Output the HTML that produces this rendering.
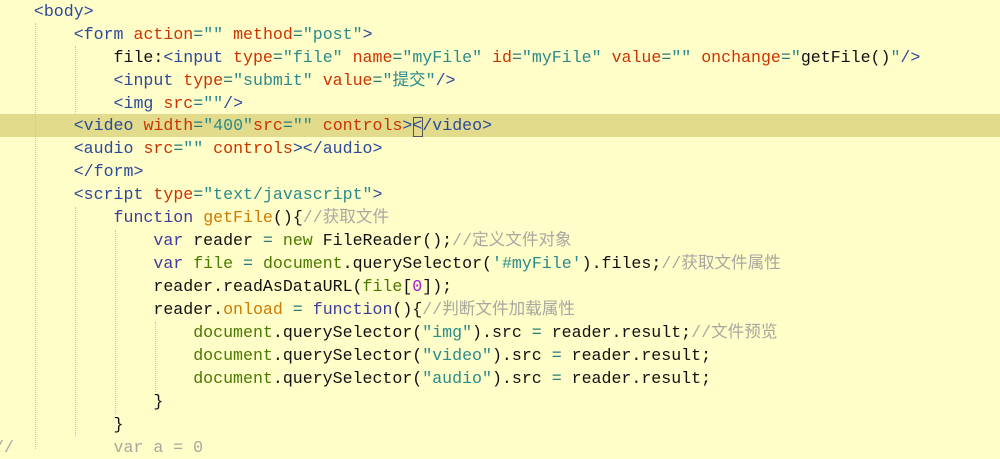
<!DOCTYPE html>
<html><head><meta charset="utf-8"><style>
body{margin:0;width:1000px;height:449px;overflow:hidden;background:#fffdc8;position:relative}
.l{position:absolute;left:4px;height:23px;line-height:23px;white-space:pre;font-family:"Liberation Mono","Noto Sans CJK SC",monospace;font-size:16.6px;color:#111}
.hl{position:absolute;left:0;width:1000px;top:114px;height:23px;background:#e2db8c}
.g{position:absolute;width:0;border-left:1px dotted #c8c8a0}
.t{color:#2b4a9a}.a{color:#cc3300}.v{color:#2a8c8c}.k{color:#3d3da0}.f{color:#d07a00}.c{color:#a8a8a0}.d{color:#4a7a00}.n{color:#a020d0}.e{color:#2a7a7a}
.cur{position:absolute;left:413px;top:117px;width:8px;height:18px;border:1px solid #555}
</style></head><body>
<div class="hl"></div>
<div class="g" style="left:35px;top:23px;height:426px"></div>
<div class="g" style="left:75px;top:46px;height:68px"></div>
<div class="g" style="left:75px;top:207px;height:230px"></div>
<div class="g" style="left:115px;top:230px;height:184px"></div>
<div class="g" style="left:155px;top:322px;height:70px"></div>
<div class="cur"></div>
<div class="l" style="top:0"><span class="t">   &lt;body&gt;</span></div>
<div class="l" style="top:23px">       <span class="t">&lt;form</span> <span class="a">action</span><span class="e">=</span><span class="v">""</span> <span class="a">method</span><span class="e">=</span><span class="v">"post"</span><span class="t">&gt;</span></div>
<div class="l" style="top:46px">           file:<span class="t">&lt;input</span> <span class="a">type</span><span class="e">=</span><span class="v">"file"</span> <span class="a">name</span><span class="e">=</span><span class="v">"myFile"</span> <span class="a">id</span><span class="e">=</span><span class="v">"myFile"</span> <span class="a">value</span><span class="e">=</span><span class="v">""</span> <span class="a">onchange</span><span class="e">=</span><span class="v">"</span>getFile()<span class="v">"</span><span class="t">/&gt;</span></div>
<div class="l" style="top:69px">           <span class="t">&lt;input</span> <span class="a">type</span><span class="e">=</span><span class="v">"submit"</span> <span class="a">value</span><span class="e">=</span><span class="v">"提交"</span><span class="t">/&gt;</span></div>
<div class="l" style="top:92px">           <span class="t">&lt;img</span> <span class="a">src</span><span class="e">=</span><span class="v">""</span><span class="t">/&gt;</span></div>
<div class="l" style="top:114px">       <span class="t">&lt;video</span> <span class="a">width</span><span class="e">=</span><span class="v">"400"</span><span class="a">src</span><span class="e">=</span><span class="v">""</span> <span class="a">controls</span><span class="t">&gt;&lt;/video&gt;</span></div>
<div class="l" style="top:137px">       <span class="t">&lt;audio</span> <span class="a">src</span><span class="e">=</span><span class="v">""</span> <span class="a">controls</span><span class="t">&gt;&lt;/audio&gt;</span></div>
<div class="l" style="top:160px">       <span class="t">&lt;/form&gt;</span></div>
<div class="l" style="top:183px">       <span class="t">&lt;script</span> <span class="a">type</span><span class="e">=</span><span class="v">"text/javascript"</span><span class="t">&gt;</span></div>
<div class="l" style="top:206px">           <span class="k">function</span> <span class="f">getFile</span>(){<span class="c">//获取文件</span></div>
<div class="l" style="top:229px">               <span class="k">var</span> reader <span class="e">=</span> <span class="d">new</span> FileReader();<span class="c">//定义文件对象</span></div>
<div class="l" style="top:252px">               <span class="k">var</span> <span class="d">file</span> <span class="e">=</span> <span class="d">document</span>.querySelector(<span class="v">'#myFile'</span>).files;<span class="c">//获取文件属性</span></div>
<div class="l" style="top:275px">               reader.readAsDataURL(<span class="d">file</span>[<span class="n">0</span>]);</div>
<div class="l" style="top:298px">               reader.<span class="f">onload</span> <span class="e">=</span> <span class="k">function</span>(){<span class="c">//判断文件加载属性</span></div>
<div class="l" style="top:321px">                   <span class="d">document</span>.querySelector(<span class="v">"img"</span>).src <span class="e">=</span> reader.result;<span class="c">//文件预览</span></div>
<div class="l" style="top:344px">                   <span class="d">document</span>.querySelector(<span class="v">"video"</span>).src <span class="e">=</span> reader.result;</div>
<div class="l" style="top:367px">                   <span class="d">document</span>.querySelector(<span class="v">"audio"</span>).src <span class="e">=</span> reader.result;</div>
<div class="l" style="top:390px">               }</div>
<div class="l" style="top:413px">           }</div>
<div class="l" style="top:436px;left:-6px"><span class="c">//          var a = 0</span></div>
</body></html>
